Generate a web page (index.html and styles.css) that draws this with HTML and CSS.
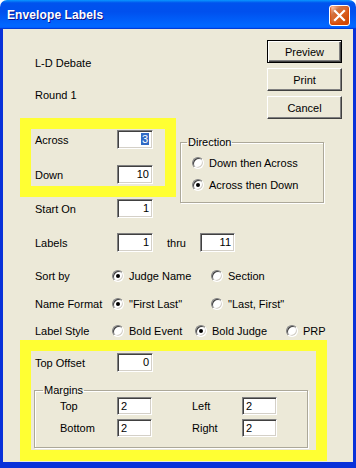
FILE: index.html
```html
<!DOCTYPE html>
<html lang="en">
<head>
  <meta charset="UTF-8" />
  <title>Envelope Labels</title>
  <link rel="stylesheet" href="styles.css">
</head>
<body>
  <div class="window">
    <div class="titlebar">
      <span class="title">Envelope Labels</span>
      <span class="close" title="Close">
        <svg width="13" height="13" viewBox="0 0 13 13"><path d="M2 2 L11 11 M11 2 L2 11" stroke="#fff" stroke-width="2.2" stroke-linecap="square"/></svg>
      </span>
    </div>
    <div class="frame">
      <div class="dialog">
        <div class="top">
          <div class="left-col">
            <p class="info first">L-D Debate</p>
            <p class="info">Round 1</p>
            <div class="highlight hl-size">
              <div class="row hl-row1"><span class="lbl">Across</span><span class="edit num"><span class="sel">3</span></span></div>
              <div class="row hl-row2"><span class="lbl">Down</span><span class="edit num">10</span></div>
            </div>
            <div class="row start-row"><span class="lbl">Start On</span><span class="edit num">1</span></div>
          </div>
          <div class="right-col">
            <button class="btn default">Preview</button>
            <button class="btn">Print</button>
            <button class="btn">Cancel</button>
            <fieldset class="group direction">
              <legend>Direction</legend>
              <div class="radio-line"><span class="radio"></span>Down then Across</div>
              <div class="radio-line second"><span class="radio on"></span>Across then Down</div>
            </fieldset>
          </div>
        </div>

        <div class="row labels-row">
          <span class="lbl">Labels</span><span class="edit num">1</span>
          <span class="thru">thru</span><span class="edit num w35">11</span>
        </div>
        <div class="row opt-row sort-row">
          <span class="lbl short">Sort by</span>
          <span class="opt w99"><span class="radio on"></span>Judge Name</span>
          <span class="opt"><span class="radio"></span>Section</span>
        </div>
        <div class="row opt-row name-row">
          <span class="lbl short">Name Format</span>
          <span class="opt w99"><span class="radio on"></span>"First Last"</span>
          <span class="opt"><span class="radio"></span>"Last, First"</span>
        </div>
        <div class="row opt-row style-row">
          <span class="lbl short">Label Style</span>
          <span class="opt w83"><span class="radio"></span>Bold Event</span>
          <span class="opt w91"><span class="radio on"></span>Bold Judge</span>
          <span class="opt"><span class="radio"></span>PRP</span>
        </div>

        <div class="highlight hl-bottom">
          <div class="row offset-row"><span class="lbl">Top Offset</span><span class="edit num">0</span></div>
          <fieldset class="group margins">
            <legend>Margins</legend>
            <div class="margin-row">
              <span class="mlbl">Top</span><span class="edit w35">2</span>
              <span class="mlbl side">Left</span><span class="edit w35">2</span>
            </div>
            <div class="margin-row second">
              <span class="mlbl">Bottom</span><span class="edit w35">2</span>
              <span class="mlbl side">Right</span><span class="edit w35">2</span>
            </div>
          </fieldset>
        </div>
      </div>
    </div>
  </div>
</body>
</html>
```

FILE: styles.css
```css
:root {
  --face: #ece9d8;
  --frame: #0831d9;
  --yellow: #ffff33;
  --shadow: #808080;
  --dark: #404040;
}
html, body {
  margin: 0;
  padding: 0;
  background: #fff;
}
body {
  font-family: 'Liberation Sans', Arial, sans-serif;
  font-size: 11px;
  color: #000;
}
.window {
  width: 356px;
  height: 468px;
  display: flex;
  flex-direction: column;
  border-radius: 7px 7px 0 0;
  overflow: hidden;
}
/* Title bar */
.titlebar {
  height: 29px;
  flex: none;
  display: flex;
  align-items: center;
  justify-content: space-between;
  padding: 1px 6px 0 7px;
  box-sizing: border-box;
  background: linear-gradient(to bottom, #0997ff 0%, #0053ee 10%, #0050ee 40%, #0066ff 86%, #0066ff 92%, #005bff 95%, #003dd7 97%, #003dd7 100%);
}
.title {
  color: #fff;
  font-weight: 700;
  font-size: 12px;
  letter-spacing: 0.1px;
  text-shadow: 1px 1px 0 #0f1089;
}
.close {
  width: 21px;
  height: 21px;
  box-sizing: border-box;
  border: 1px solid #fff;
  border-radius: 3px;
  display: flex;
  align-items: center;
  justify-content: center;
  background: radial-gradient(circle at 90% 90%, #cc4600 0%, #dc6527 55%, #cd7546 70%, #ffccb2 90%, #fff 100%);
  box-shadow: inset 0 -1px 2px 1px #da4600;
}
.frame {
  flex: 1;
  border: 3px solid var(--frame);
  border-top: none;
  border-bottom-width: 6px;
  background: var(--face);
}
.dialog {
  padding-left: 17px;
}
/* Top part: two columns */
.top {
  display: flex;
  gap: 4px;
}
.left-col {
  width: 156px;
  display: flex;
  flex-direction: column;
}
.right-col {
  width: 162px;
  display: flex;
  flex-direction: column;
}
.info {
  margin: 16px 0 0 0;
  padding-left: 15px;
  line-height: 16px;
}
.info.first {
  margin-top: 26px;
}
.row {
  display: flex;
  align-items: center;
  height: 19px;
}
.lbl {
  width: 82px;
  flex: none;
}
.lbl.short {
  width: 77px;
}
/* Yellow marker boxes */
.highlight {
  box-sizing: border-box;
  border: 11px solid var(--yellow);
  padding-left: 4px;
}
.hl-size {
  width: 156px;
  height: 79px;
  margin-top: 15px;
}
.hl-row1 {
  margin-top: 1px;
}
.hl-row2 {
  margin-top: 16px;
}
.start-row {
  margin-top: 2px;
  padding-left: 15px;
}
/* Sunken edit boxes */
.edit {
  width: 36px;
  height: 19px;
  box-sizing: border-box;
  flex: none;
  background: #fff;
  border: 1px solid;
  border-color: var(--shadow) #fff #fff var(--shadow);
  box-shadow: inset 1px 1px 0 var(--dark), inset -1px -1px 0 #d4d0c8;
  line-height: 16px;
  padding: 0 3px;
  text-align: left;
}
.edit.num {
  text-align: right;
}
.edit.w35 {
  width: 35px;
}
.sel {
  background: #316ac5;
  color: #fff;
  padding: 0 1px;
}
/* Buttons */
.btn {
  align-self: flex-end;
  width: 75px;
  height: 23px;
  margin: 5px 0 0 0;
  padding: 0;
  font: inherit;
  color: #000;
  background: var(--face);
  border: 1px solid;
  border-color: #fff var(--dark) var(--dark) #fff;
  box-shadow: inset -1px -1px 0 var(--shadow);
}
.btn.default {
  margin-top: 11px;
  border-color: #000;
  box-shadow: inset 1px 1px 0 #fff, inset -1px -1px 0 var(--dark), inset -2px -2px 0 var(--shadow);
}
/* Group boxes */
.group {
  margin: 0;
  padding: 0;
  border: 1px solid #aca899;
  box-shadow: 1px 1px 0 #fff, inset 1px 1px 0 #fff;
  min-inline-size: 0;
}
.group legend {
  padding: 0 1px;
  line-height: 14px;
}
.direction {
  width: 144px;
  box-sizing: border-box;
  margin-top: 16px;
  padding: 6px 0 9px 11px;
}
.direction legend {
  margin-left: -5px;
}
.radio-line {
  display: flex;
  align-items: center;
  height: 16px;
}
.radio-line.second {
  margin-top: 6px;
}
/* Radio buttons */
.radio {
  width: 12px;
  height: 12px;
  box-sizing: border-box;
  flex: none;
  margin-right: 5px;
  border-radius: 50%;
  background: #fff;
  border: 1px solid;
  border-color: var(--shadow) #fff #fff var(--shadow);
  box-shadow: inset 1px 1px 0 var(--dark), inset -1px -1px 0 #d4d0c8;
  display: flex;
  align-items: center;
  justify-content: center;
}
.radio.on::after {
  content: '';
  width: 4px;
  height: 4px;
  border-radius: 50%;
  background: #000;
}
/* Option rows */
.labels-row {
  margin-top: 15px;
  padding-left: 15px;
}
.thru {
  width: 33px;
  margin-left: 14px;
}
.opt-row {
  padding-left: 15px;
}
.opt {
  display: flex;
  align-items: center;
}
.opt.w99 { width: 99px; }
.opt.w83 { width: 83px; }
.opt.w91 { width: 91px; }
.sort-row { margin-top: 14px; }
.name-row { margin-top: 9px; }
.style-row { margin-top: 8px; }
/* Bottom marker box */
.hl-bottom {
  width: 307px;
  height: 121px;
}
.offset-row {
  margin-top: 2px;
}
.margins {
  width: 274px;
  box-sizing: border-box;
  margin: 11px 0 0 -1px;
  padding: 0 0 10px 25px;
}
.margins legend {
  margin-left: -17px;
}
.margin-row {
  display: flex;
  align-items: center;
  height: 18px;
}
.margin-row .edit {
  height: 18px;
}
.margin-row.second {
  margin-top: 4px;
}
.mlbl {
  width: 57px;
}
.mlbl.side {
  width: 50px;
  margin-left: 40px;
}
```
